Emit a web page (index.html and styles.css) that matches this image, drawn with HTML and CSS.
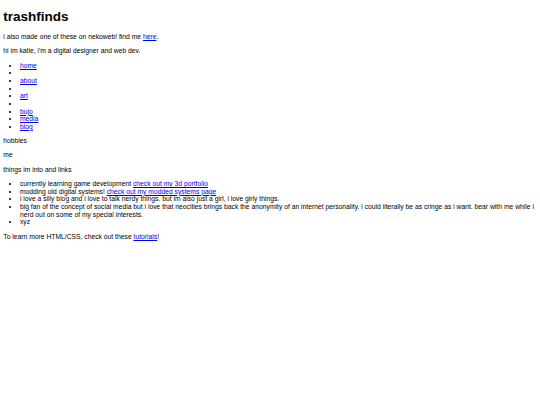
FILE: index.html
```html
<!DOCTYPE html>
<html>
<head>
<meta charset="utf-8">
<title>trashfinds</title>
<link rel="stylesheet" href="styles.css">
</head>
<body class="page">
<h1 class="title">trashfinds</h1>
<p class="text">i also made one of these on nekoweb! find me <a class="link" href="#">here</a>.</p>
<p class="text">hi im katie, i'm a digital designer and web dev.</p>
<ul class="list">
<li><a class="link" href="#">home</a></li>
<li></li>
<li><a class="link" href="#">about</a></li>
<li></li>
<li><a class="link" href="#">art</a></li>
<li></li>
<li><a class="link" href="#">bujo</a></li>
<li><a class="link" href="#">media</a></li>
<li><a class="link" href="#">blog</a></li>
</ul>
<p class="text">hobbies</p>
<p class="text">me</p>
<p class="text">things im into and links</p>
<ul class="list">
<li>currently learning game development <a class="link" href="#">check out my 3d portfolio</a></li>
<li>modding old digital systems! <a class="link" href="#">check out my modded systems page</a></li>
<li>i love a silly blog and i love to talk nerdy things. but im also just a girl, i love girly things.</li>
<li>big fan of the concept of social media but i love that neocities brings back the anonymity of an internet personality. i could literally be as cringe as i want. bear with me while i nerd out on some of my special interests.</li>
<li>xyz</li>
</ul>
<p class="text">To learn more HTML/CSS, check out these <a class="link" href="#">tutorials</a>!</p>
</body>
</html>
```
FILE: styles.css
```css
html {
  background: #ffffff;
}
.page {
  margin: 3.333px;
  font-family: "Liberation Sans", Arial, sans-serif;
  font-size: 6.75px;
  line-height: 7.66px;
  color: #000000;
}
.title {
  font-size: 13.5px;
  line-height: 15.33px;
  font-weight: bold;
  margin: 5.9px 0 8.4px;
}
.text {
  margin: 6.667px 0;
}
.list {
  margin: 6.667px 0;
  padding-left: 16.667px;
  list-style: disc;
}
.link {
  color: #0000ee;
  text-decoration: underline;
}
```
